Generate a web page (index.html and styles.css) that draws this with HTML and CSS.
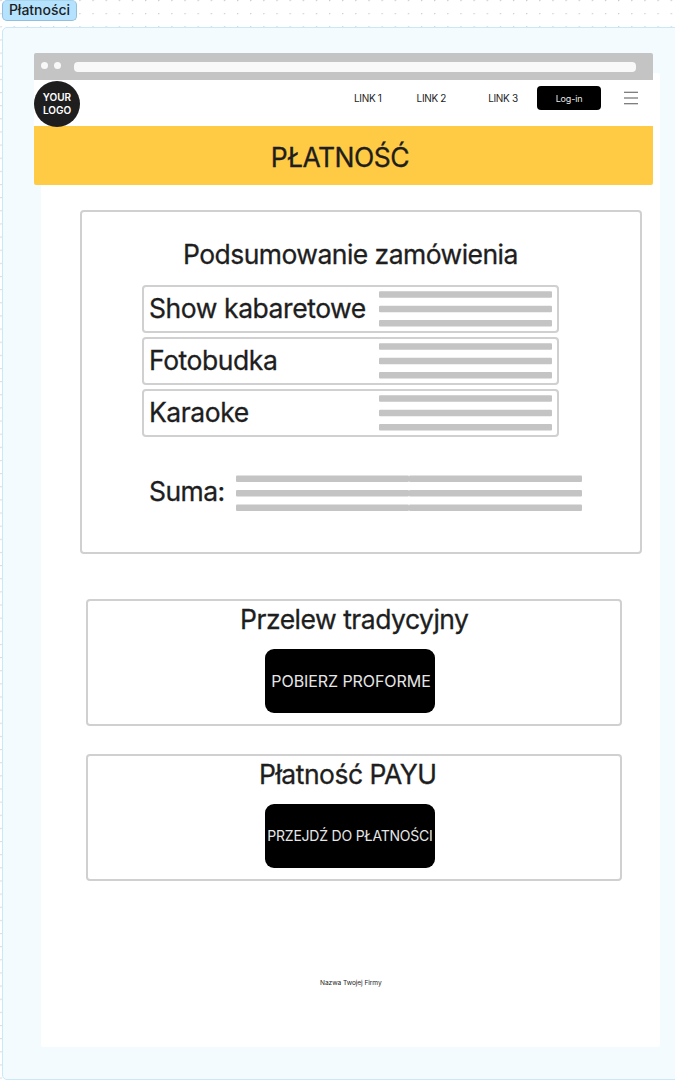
FILE: index.html
```html
<!DOCTYPE html>
<html lang="pl">
<head>
<meta charset="utf-8">
<title>Płatności</title>
<link rel="stylesheet" href="styles.css">
</head>
<body>
<div class="canvas">
  <div class="section-label">Płatności</div>
  <main class="section">
    <header class="browser">
      <div class="chrome"><i class="dot"></i><i class="dot"></i><div class="address"></div></div>
      <nav class="nav">
        <div class="logo">YOUR<br>LOGO</div>
        <div class="links"><a>LINK 1</a><a>LINK 2</a><a>LINK 3</a></div>
        <button class="login">Log-in</button>
        <svg class="menu" viewBox="0 0 14 14"><path d="M0 1.2H14M0 7H14M0 12.8H14" /></svg>
      </nav>
      <h1 class="banner"><span>PŁATNOŚĆ</span></h1>
    </header>
    <div class="paper">
      <section class="summary">
        <h2 class="heading summary-title">Podsumowanie zamówienia</h2>
        <div class="rows">
          <div class="row"><span class="heading">Show kabaretowe</span>
            <svg class="lines" viewBox="0 0 173 36"><rect y=".2" width="173" height="6.5" rx="1"/><rect y="14.7" width="173" height="6.5" rx="1"/><rect y="29.1" width="173" height="6.5" rx="1"/></svg></div>
          <div class="row"><span class="heading">Fotobudka</span>
            <svg class="lines" viewBox="0 0 173 36"><rect y=".2" width="173" height="6.5" rx="1"/><rect y="14.7" width="173" height="6.5" rx="1"/><rect y="29.1" width="173" height="6.5" rx="1"/></svg></div>
          <div class="row"><span class="heading">Karaoke</span>
            <svg class="lines" viewBox="0 0 173 36"><rect y=".2" width="173" height="6.5" rx="1"/><rect y="14.7" width="173" height="6.5" rx="1"/><rect y="29.1" width="173" height="6.5" rx="1"/></svg></div>
        </div>
        <div class="total"><span class="heading">Suma:</span>
          <div class="total-lines">
            <svg class="lines" viewBox="0 0 173 36"><rect y=".5" width="173" height="6.5" rx="1"/><rect y="15" width="173" height="6.5" rx="1"/><rect y="29.4" width="173" height="6.5" rx="1"/></svg>
            <svg class="lines" viewBox="0 0 173 36"><rect y=".5" width="173" height="6.5" rx="1"/><rect y="15" width="173" height="6.5" rx="1"/><rect y="29.4" width="173" height="6.5" rx="1"/></svg>
          </div>
        </div>
      </section>
      <section class="payment">
        <h2 class="heading transfer">Przelew tradycyjny</h2>
        <button class="action">POBIERZ PROFORME</button>
      </section>
      <section class="payment second">
        <h2 class="heading payu">Płatność PAYU</h2>
        <button class="action small">PRZEJDŹ DO PŁATNOŚCI</button>
      </section>
      <footer class="footer">Nazwa Twojej Firmy</footer>
    </div>
  </main>
</div>
</body>
</html>
```
FILE: styles.css
```css
* { box-sizing: border-box; }
body { margin: 0; font-family: Inter, "Liberation Sans", sans-serif; color: #1e1e1e; }
h1, h2 { margin: 0; font-weight: 400; }
button { border: 0; padding: 0; font-family: inherit; background: #000; white-space: nowrap; }
svg { display: block; flex: none; }
.canvas {
  width: 675px; height: 1080px; overflow: hidden; padding-left: 2px;
  background: radial-gradient(circle at 1.5px .5px, #c8c8c8 .6px, transparent 1px) -.5px 0 / 13.15px 13.15px #fff;
}
.section-label {
  width: 75px; height: 21px; border: 1px solid #93bfda; border-top-color: #a8d4ec; border-radius: 5px;
  background: #b5e3ff; font-size: 14px; font-weight: 500; line-height: 18px; text-align: center;
}
.section {
  width: 690px; height: 1053px; margin-top: 6px; padding: 25px 0 0 32px;
  border: 1px solid #cae8f7; border-radius: 5px; background: #f3fbff;
}
.browser { position: relative; z-index: 1; width: 619px; height: 132px; margin-left: -1px; }
.chrome {
  display: flex; align-items: center; height: 27px; padding-left: 7px;
  background: #c4c4c4; border-radius: 2px 2px 0 0;
}
.dot { width: 7px; height: 7px; margin: 0 6px 2px 0; border-radius: 50%; background: #f8f8f8; }
.address { width: 562px; height: 10px; margin: 1px 0 0 7px; border-radius: 4px; background: #f8f8f8; }
.nav { display: flex; height: 46px; background: #fff; }
.logo {
  flex: none; width: 46px; height: 46px; margin-top: 1px; padding-top: 10px; border-radius: 50%;
  background: #1e1e1e; color: #fff; font-size: 10px; font-weight: 600; line-height: 13px; text-align: center;
}
.links { display: flex; gap: 35px; width: 163px; margin-left: 274px; padding-top: 11px; font-size: 10px; letter-spacing: -.32px; line-height: 15px; white-space: nowrap; }
.links a:last-child { margin-left: 7px; }
.login { width: 64px; height: 24px; margin: 6px 0 0 20px; border-radius: 4px; color: #e8e8e8; font-size: 9px; letter-spacing: -.15px; }
.menu { width: 14px; height: 14px; margin: 11px 0 0 23px; fill: none; stroke: #555; stroke-width: 1.1; }
.banner {
  height: 59px; padding-right: 7px; background: #ffcb45; border-radius: 0 0 2px 2px;
  font-size: 26.5px; letter-spacing: -.5px; line-height: 63px; text-align: center; -webkit-text-stroke: .3px #1e1e1e;
}
.paper {
  width: 619px; height: 974px; margin: -112px 0 0 6px; padding: 137px 0 0 39px;
  background: #fff; border-radius: 2px;
}
.heading {
  display: block; font-size: 26.5px; line-height: 32px; font-weight: 400; letter-spacing: -.55px;
  white-space: nowrap; -webkit-text-stroke: .3px #1e1e1e;
}
.summary { width: 562px; height: 344px; padding: 26px 0 0 60px; border: 2px solid #d0d0d0; border-radius: 4px; }
.summary-title { margin-left: 41px; }
.rows { display: flex; flex-direction: column; gap: 4px; margin-top: 15px; }
.row {
  display: flex; justify-content: space-between; width: 417px; height: 48px; padding: 5px 5px 0 5px;
  border: 2px solid #d0d0d0; border-radius: 4px;
}
.row .heading { letter-spacing: -.44px; }
.lines { width: 173px; height: 36px; fill: #c4c4c4; }
.row .lines { margin-top: -1px; }
.total { display: flex; align-items: flex-start; gap: 11px; margin: 38px 0 0 7px; }
.total-lines { display: flex; }
.payment {
  display: flex; flex-direction: column; width: 536px; height: 127px; margin: 45px 0 0 6px; padding-top: 2px;
  border: 2px solid #d0d0d0; border-radius: 4px;
}
.payment .heading { letter-spacing: -.5px; }
.second { margin-top: 28px; }
.transfer { margin-left: 152px; }
.payu { margin-left: 171px; }
.action { width: 170px; height: 64px; margin: 14px 0 0 177px; padding-left: 2px; border-radius: 9px; color: #e6e6e6; font-size: 16px; letter-spacing: -.07px; }
.small { padding: 0 0 2px; font-size: 14px; letter-spacing: -.22px; }
.footer { margin: 97px 0 0 240px; font-size: 6.6px; letter-spacing: -.06px; line-height: 10px; }
```
